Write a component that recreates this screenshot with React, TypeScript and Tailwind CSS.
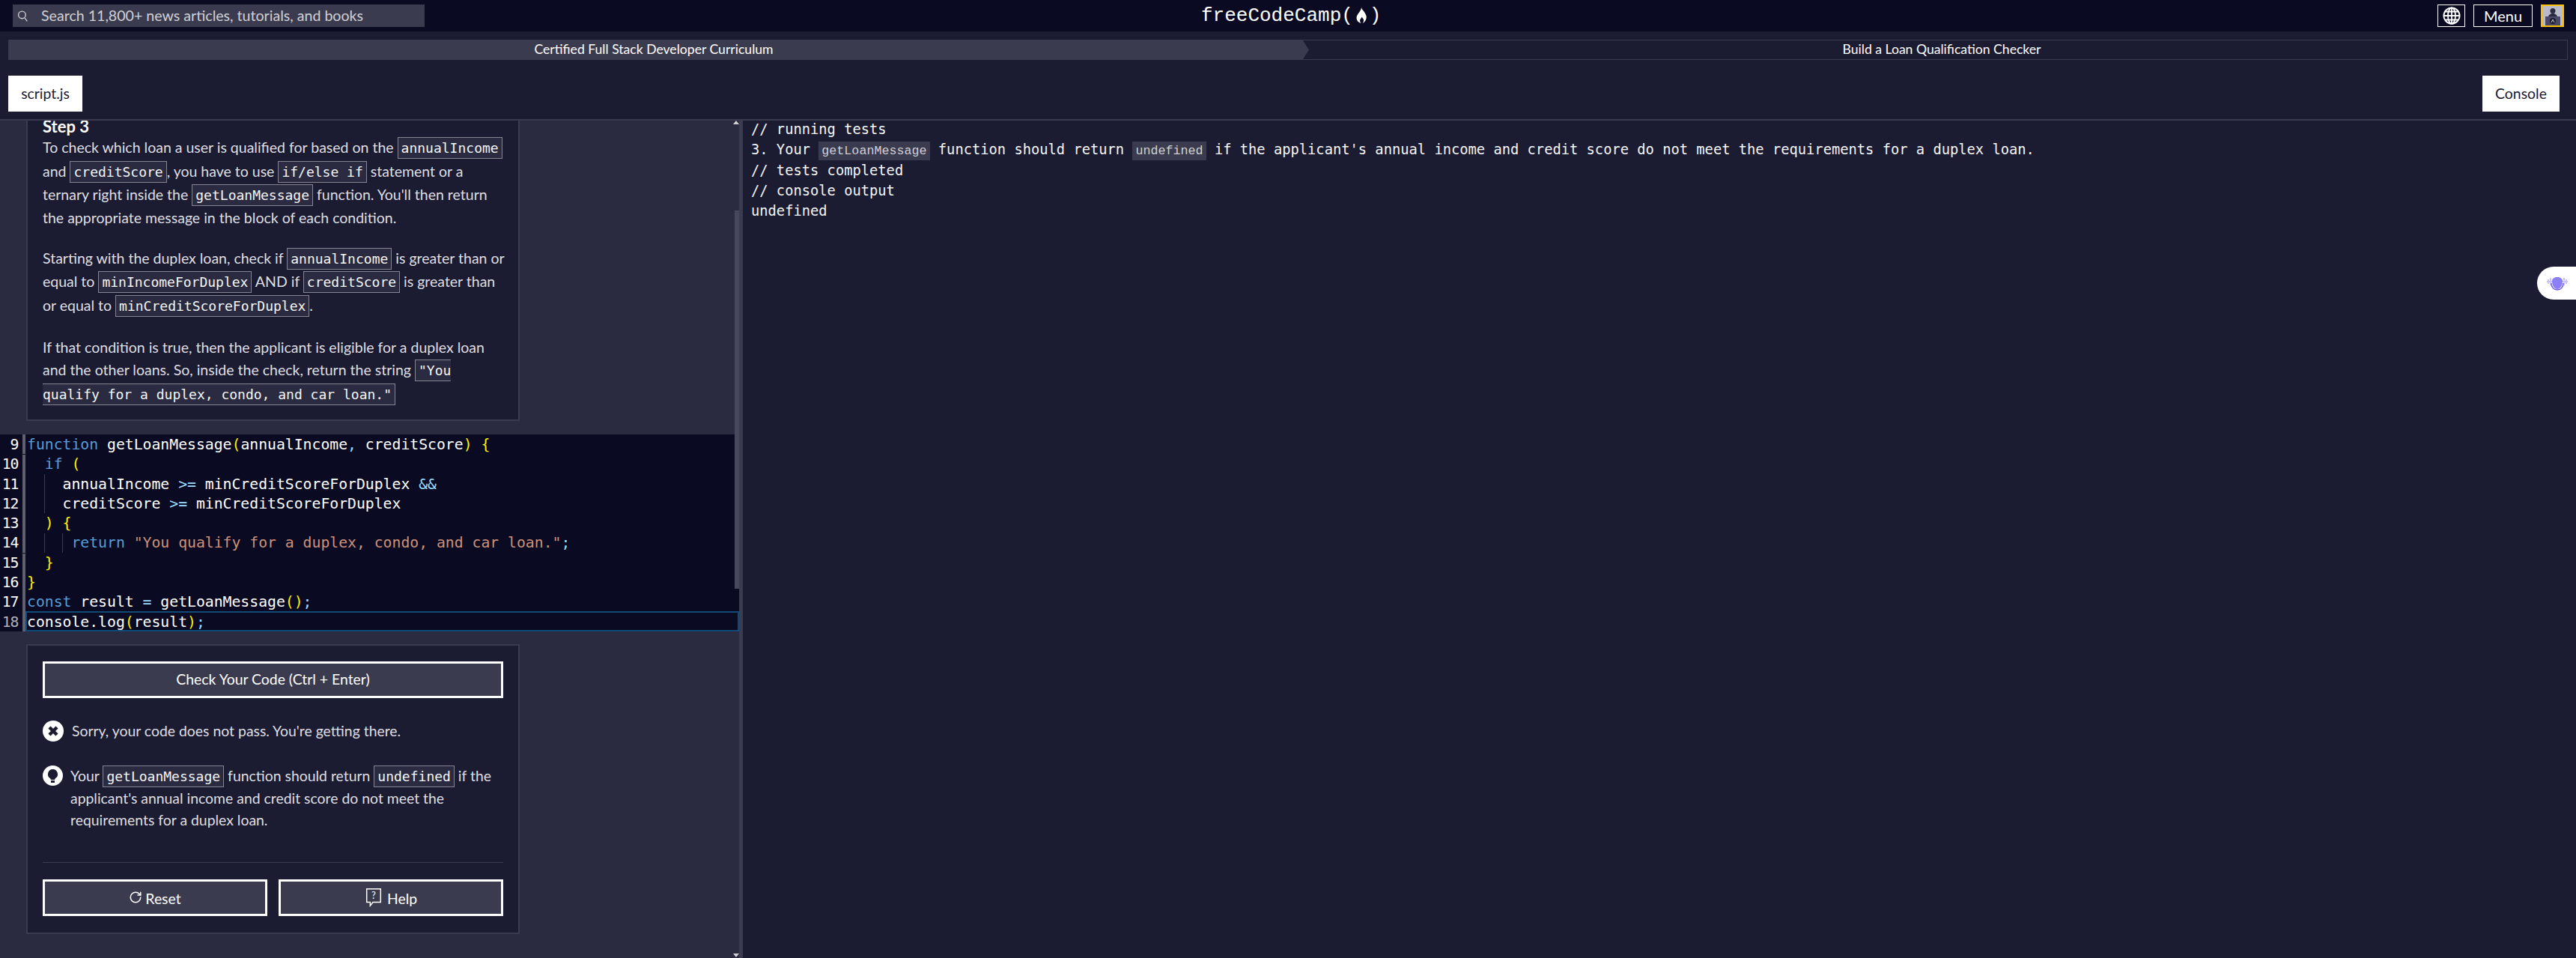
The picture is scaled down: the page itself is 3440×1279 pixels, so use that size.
import { RotateCw } from "lucide-react";

const lato = "font-['Lato','Noto_Sans',sans-serif]";
const mono = "font-['DejaVu_Sans_Mono',monospace]";

function Code({ children }: { children: React.ReactNode }) {
  return (
    <code className={`${mono} rounded-none border border-[#858591] bg-[#2a2a40] px-[4px] py-[3px] text-[18px] leading-[31.600px] text-[#f5f6f7]`}>
      {children}
    </code>
  );
}

function ConsoleCode({ children }: { children: React.ReactNode }) {
  return <code className="bg-[#3b3b4f] px-[4px] py-[3px] text-[16.7px] text-[#d0d0d5]">{children}</code>;
}

function Flame() {
  return (
    <svg viewBox="0 0 16 22" className="mx-[3px] inline-block h-[22px] w-[16px]" fill="#fff">
      <path d="M8 0c.6 3 5.600 6.800 6.600 11.600.6 3.600-1.200 7.600-5 9.400 1.600-1.800 2-4.200.8-6-.5-.8-1.200-1.400-1.600-2.600-.4 1.400-2.200 2.400-2.600 4.200-.3 1.600.2 3.200 1.200 4.400C3.400 20 1.200 16.600 1.600 13 2 8.800 7.400 5.400 8 0z" />
    </svg>
  );
}

function Globe() {
  return (
    <svg viewBox="0 0 24 24" className="h-[24px] w-[24px]" fill="none" stroke="#fff" strokeWidth="1.800">
      <circle cx="12" cy="12" r="10.600" />
      <ellipse cx="12" cy="12" rx="5" ry="10.600" />
      <path d="M12 1.400v21.200M1.400 12h21.200M3 6.500h18M3 17.500h18" />
    </svg>
  );
}

function Avatar() {
  return (
    <div className="flex h-[30px] w-[31px] flex-col items-center overflow-hidden border-[2px] border-[#ffbf00] bg-[#b9bbcc]">
      <svg viewBox="0 0 27 26" className="h-full w-full">
        <circle cx="14" cy="6.500" r="3.500" fill="#2a2a40" />
        <path d="M8 15c0-3 3-5 6-5s6 2 6 5z" fill="#2a2a40" />
        <rect x="4" y="14" width="20" height="12" fill="#4a4a68" />
        <circle cx="14" cy="20" r="4" fill="#1b1b32" />
        <path d="M12 22l2-4 2 4" stroke="#fff" strokeWidth="0.800" fill="none" />
      </svg>
    </div>
  );
}

function Header() {
  return (
    <header className="flex h-[42px] items-center justify-between bg-[#0a0a23] pl-[17px] pr-[16px]">
      <div className="flex h-[30px] w-[550px] items-center bg-[#3b3b4f] pl-[5px]">
        <svg viewBox="0 0 16 16" className="h-[17px] w-[17px]" fill="none" stroke="#d0d0d5" strokeWidth="1.300">
          <circle cx="7" cy="6.500" r="4.500" />
          <path d="M10.500 10.500l3 4" />
        </svg>
        <span className={`${lato} ml-[16px] text-[19.600px] text-[#d0d0d5]`}>Search 11,800+ news articles, tutorials, and books</span>
      </div>
      <div className="absolute left-[1604px] top-[4px] flex h-[34px] items-center font-['Liberation_Mono',monospace] text-[26px] leading-none text-white">
        freeCodeCamp(<Flame />)
      </div>
      <div className="flex items-center gap-[11px]">
        <button className="flex h-[30px] w-[37px] items-center justify-center border-[1px] border-white">
          <Globe />
        </button>
        <button className={`${lato} h-[30px] w-[79px] border-[1px] border-white text-[20px] leading-[26px] text-white`}>Menu</button>
        <Avatar />
      </div>
    </header>
  );
}

function Breadcrumb() {
  return (
    <div className={`${lato} flex h-[27px] pl-[11px] pr-[11px] text-[17.600px] text-white`}>
      <div className="relative flex w-[1737px] items-center justify-center bg-[#3b3b4f] pr-[13px] [clip-path:polygon(0_0,99.5%_0,100%_50%,99.5%_100%,0_100%)]">
        Certified Full Stack Developer Curriculum
      </div>
      <div className="-ml-[9px] flex flex-1 items-center justify-center border border-[#3b3b4f] pl-[18px]">
        Build a Loan Qualification Checker
      </div>
    </div>
  );
}

function Tabs() {
  return (
    <div className={`${lato} flex h-[81px] items-start justify-between border-b-2 border-[#3b3b4f] pl-[11px] pr-[22px] pt-[21px] text-[19.400px] text-[#1b1b32]`}>
      <button className="h-[48px] w-[99px] bg-white">script.js</button>
      <button className="h-[48px] w-[103px] bg-white">Console</button>
    </div>
  );
}

function Instructions() {
  return (
    <section className={`${lato} ml-[35px] h-[401px] w-[659px] overflow-hidden border-x-2 border-b-2 border-[#3b3b4f] bg-[#1b1b32] pl-[20px] pr-[17px] text-[19.500px] leading-[28.800px] text-[#dfdfe2]`}>
      <h2 className="-mt-[5px] text-[22px] font-bold leading-[26px] text-white">Step 3</h2>
      <p className="mb-[24px]">
        To check which loan a user is qualified for based on the <Code>annualIncome</Code> and <Code>creditScore</Code>, you have to use <Code>if/else if</Code> statement or a ternary right inside the <Code>getLoanMessage</Code> function. You'll then return the appropriate message in the block of each condition.
      </p>
      <p className="mb-[26px]">
        Starting with the duplex loan, check if <Code>annualIncome</Code> is greater than or equal to <Code>minIncomeForDuplex</Code> AND if <Code>creditScore</Code> is greater than or equal to <Code>minCreditScoreForDuplex</Code>.
      </p>
      <p>
        If that condition is true, then the applicant is eligible for a duplex loan and the other loans. So, inside the check, return the string <Code>"You qualify for a duplex, condo, and car loan."</Code>
      </p>
    </section>
  );
}

const KW = "text-[#569cd6]";
const BR = "text-[#fff200]";
const OP = "text-[#9cdcfe]";
const STR = "text-[#ce9178]";

const codeLines: React.ReactNode[] = [
  <><span className={KW}>function</span> getLoanMessage<span className={BR}>(</span>annualIncome<span className={OP}>,</span> creditScore<span className={BR}>)</span> <span className={BR}>{"{"}</span></>,
  <>  <span className={KW}>if</span> <span className={BR}>(</span></>,
  <>    annualIncome <span className={OP}>&gt;=</span> minCreditScoreForDuplex <span className={OP}>&amp;&amp;</span></>,
  <>    creditScore <span className={OP}>&gt;=</span> minCreditScoreForDuplex</>,
  <>  <span className={BR}>)</span> <span className={BR}>{"{"}</span></>,
  <>     <span className={KW}>return</span> <span className={STR}>"You qualify for a duplex, condo, and car loan."</span><span className={OP}>;</span></>,
  <>  <span className={BR}>{"}"}</span></>,
  <><span className={BR}>{"}"}</span></>,
  <><span className={KW}>const</span> result <span className={OP}>=</span> getLoanMessage<span className={BR}>()</span><span className={OP}>;</span></>,
  <>console.log<span className={BR}>(</span>result<span className={BR}>)</span><span className={OP}>;</span></>,
];

function Editor() {
  return (
    <div className={`${mono} relative mt-[18px] flex h-[263px] w-[987px] bg-[#0a0a23] text-[19.760px] leading-[26.300px] text-white`}>
      <div className="w-[30px] shrink-0 pt-px">
        {codeLines.map((_, i) => (
          <div key={i} className={`h-[26.300px] pr-[6px] text-right tracking-[-1.300px] ${i === 9 ? "text-[#b0b0b8]" : ""}`}>
            {i + 9}
          </div>
        ))}
      </div>
      <div className="flex w-[4px] shrink-0 flex-col gap-px">
        <div className="h-[26px] bg-[#606070]" />
        <div className="h-[131px] bg-[#606070]" />
        <div className="flex-1 bg-[#606070]" />
      </div>
      <div className="relative flex-1 whitespace-pre pl-[2px] pt-px">
        {codeLines.map((line, i) => (
          <div key={i} className="h-[26.300px]">{line}</div>
        ))}
        <div className="absolute left-[25px] top-[53px] h-[52px] w-px bg-[#3b3b4f]" />
        <div className="absolute left-[25px] top-[132px] h-[26px] w-px bg-[#3b3b4f]" />
        <div className="absolute left-[49px] top-[132px] h-[26px] w-px bg-[#3b3b4f]" />
        <div className="absolute inset-x-0 bottom-0 h-[27px] border-2 border-[#0e4a75]" />
      </div>
    </div>
  );
}

function FailIcon() {
  return (
    <svg viewBox="0 0 28 28" className="h-[28px] w-[28px] shrink-0">
      <circle cx="14" cy="14" r="14" fill="#fff" />
      <path d="M9 9l10 10M19 9L9 19" stroke="#1b1b32" strokeWidth="4.500" />
    </svg>
  );
}

function BulbIcon() {
  return (
    <svg viewBox="0 0 27 27" className="h-[27px] w-[27px] shrink-0">
      <circle cx="13.500" cy="13.500" r="13.500" fill="#fff" />
      <path d="M13.500 5a6.500 6.500 0 0 0-3.500 12l1 2h5l1-2A6.500 6.500 0 0 0 13.500 5z" fill="#1b1b32" />
      <rect x="11" y="20" width="5" height="3" fill="#1b1b32" />
    </svg>
  );
}

function HelpIcon() {
  return (
    <svg viewBox="0 0 24 28" className="mr-[6px] h-[26px] w-[24px]" fill="none" stroke="#fff" strokeWidth="1.600">
      <path d="M2 2h20v19H11l-4 5v-5H2z" />
      <text x="12" y="16" textAnchor="middle" fontSize="14" fill="#fff" stroke="none" fontFamily="Lato">?</text>
    </svg>
  );
}

function ActionButton({ children }: { children: React.ReactNode }) {
  return (
    <button className="flex h-[49px] flex-1 items-center justify-center border-[3px] border-white bg-[#3b3b4f] text-[19.400px] text-white">
      {children}
    </button>
  );
}

function Actions() {
  return (
    <section className={`${lato} ml-[35px] mt-[17px] flex h-[387px] w-[659px] flex-col border-2 border-[#3b3b4f] bg-[#1b1b32] px-[20px] pt-[21px] text-[19.400px] leading-[28.800px] text-[#dfdfe2]`}>
      <div className="flex">
        <ActionButton>Check Your Code (Ctrl + Enter)</ActionButton>
      </div>
      <div className="mt-[30px] flex items-center">
        <FailIcon />
        <span className="ml-[11px]">Sorry, your code does not pass. You're getting there.</span>
      </div>
      <div className="mt-[31px] flex items-start">
        <BulbIcon />
        <p className="ml-[10px] mt-[-1px]">
          Your <Code>getLoanMessage</Code> function should return <Code>undefined</Code> if the applicant's annual income and credit score do not meet the requirements for a duplex loan.
        </p>
      </div>
      <hr className="mt-[41px] border-t border-[#3b3b4f]" />
      <div className="mt-[22px] flex gap-[15px]">
        <ActionButton>
          <RotateCw className="mr-[4px] h-[18px] w-[18px]" strokeWidth={2} />
          <span className="pt-[4px]">Reset</span>
        </ActionButton>
        <ActionButton>
          <HelpIcon />
          <span className="pt-[4px]">Help</span>
        </ActionButton>
      </div>
    </section>
  );
}

function Scrollbar() {
  return (
    <>
      <div className="absolute right-0 top-[120px] h-[505px] w-[6px] bg-[#48485c]" />
      <div className="absolute right-0 top-0 h-0 w-0 border-x-[4px] border-b-[5px] border-x-transparent border-b-[#d0d0d5]" />
      <div className="absolute bottom-[1px] right-0 h-0 w-0 border-x-[4px] border-t-[5px] border-x-transparent border-t-[#d0d0d5]" />
    </>
  );
}

function BugWidget() {
  return (
    <div className="absolute left-[3388px] top-[356px] flex h-[44px] w-[52px] items-center justify-center rounded-l-full bg-white pl-[2px]">
      <svg viewBox="0 0 30 20" className="h-[20px] w-[30px]">
        <path d="M1 8h28" stroke="#c9c2fb" strokeWidth="2" />
        <path d="M3 5v6M6 3v10M24 3v10M27 5v6" stroke="#c9c2fb" strokeWidth="2" />
        <path d="M8 7c0-3 3-5 7-5s7 2 7 5c0 6-3 11-7 11S8 13 8 7z" fill="#8b7ffb" />
        <path d="M7 10c0 5 3 9 8 9s8-4 8-9" fill="none" stroke="#6f5ff0" strokeWidth="1.500" />
      </svg>
    </div>
  );
}

function ConsolePane() {
  return (
    <div className={`${mono} -mt-[1px] flex-1 whitespace-pre pl-[11px] text-[18.750px] leading-[26.700px] text-[#f5f6f7]`}>
      <div>// running tests</div>
      <div>3. Your <ConsoleCode>getLoanMessage</ConsoleCode> function should return <ConsoleCode>undefined</ConsoleCode> if the applicant's annual income and credit score do not meet the requirements for a duplex loan.</div>
      <div>// tests completed</div>
      <div>// console output</div>
      <div>undefined</div>
    </div>
  );
}

export default function App() {
  return (
    <div className="relative h-[1279px] w-[3440px] overflow-hidden bg-[#1b1b32]">
      <Header />
      <div className="h-[11px]" />
      <Breadcrumb />
      <Tabs />
      <div className="flex h-[1118px]">
        <div className="relative h-full w-[987px] shrink-0 overflow-hidden bg-[#2a2a40]">
          <div className="relative">
            <Instructions />
            <Editor />
            <Actions />
          </div>
          <Scrollbar />
        </div>
        <div className="h-full w-[5px] shrink-0 bg-[#3b3b4f]" />
        <ConsolePane />
      </div>
      <BugWidget />
    </div>
  );
}
